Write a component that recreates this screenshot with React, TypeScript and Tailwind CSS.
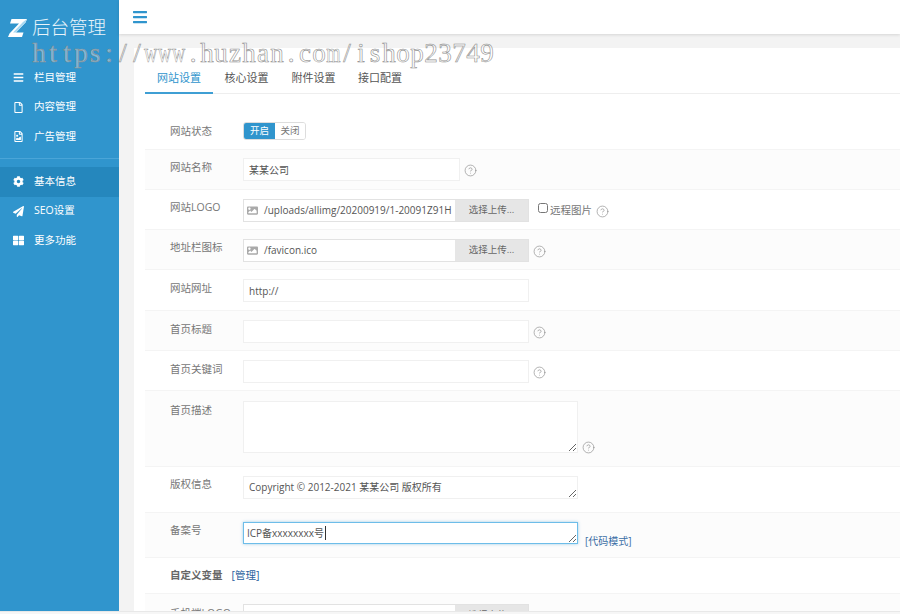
import { FaBars, FaCog, FaImage, FaPaperPlane, FaRegFile, FaRegFileImage, FaThLarge } from 'react-icons/fa';
import { CircleHelp } from 'lucide-react';

const font = "font-['Open_Sans','Noto_Sans_CJK_SC',sans-serif]";
const watermark = 'https://www.huzhan.com/ishop23749'.split('');

function Help() {
  return <CircleHelp className="ml-[4px] size-[13px] shrink-0 text-[#8a8a8a]" strokeWidth={1.2} />;
}

function NavItem({ icon, label, active }: { icon: React.ReactNode; label: string; active?: boolean }) {
  return (
    <div className={`flex items-center pl-[13px] text-[10.5px] text-white ${active ? 'h-[30px] bg-[#2587bd]' : 'h-[29.5px]'}`}>
      <span className="flex w-[21px] items-center text-[11px]">{icon}</span>
      {label}
    </div>
  );
}

function Row({ label, h, alt, top = 9, labelTop = 1, children }: { label: string; h: number; alt?: boolean; top?: number; labelTop?: number; children?: React.ReactNode }) {
  return (
    <div
      className={`flex shrink-0 border-b border-[#f4f4f4] pl-[25px] ${alt ? 'bg-[#fcfcfc]' : 'bg-white'}`}
      style={{ height: h, paddingTop: top }}
    >
      <div className="w-[73px] shrink-0 text-[10.5px] leading-[14px] text-[#777]" style={{ paddingTop: labelTop }}>{label}</div>
      {children}
    </div>
  );
}

function TextInput({ value, width }: { value?: string; width: string }) {
  return (
    <input
      readOnly
      defaultValue={value}
      className={`h-[23px] ${width} border border-[#f0f0f0] bg-white px-[5px] text-[10px] text-[#555] outline-none`}
    />
  );
}

function Upload({ value }: { value: string }) {
  return (
    <div className="flex h-[23px] w-[286px] border border-[#e2e2e2] bg-white text-[10px] text-[#555]">
      <div className="flex min-w-0 flex-1 items-center overflow-hidden pl-[3px]">
        <FaImage className="mr-[6px] size-[11px] shrink-0 text-[#aaa]" />
        <span className="whitespace-nowrap">{value}</span>
      </div>
      <div className="flex w-[73px] shrink-0 items-center justify-center bg-[#e6e6e6] text-[9.5px] text-[#666]">选择上传...</div>
    </div>
  );
}

export default function App() {
  return (
    <div className={`relative h-[614px] w-[900px] overflow-hidden border-b-2 border-[#f6f6f6] bg-[#f3f3f3] ${font}`}>
      <div className="flex h-[612px] border-b border-[#e8e8e8]">
        {/* Sidebar */}
        <aside className="flex w-[119px] shrink-0 flex-col bg-[#3095cd]">
          <div className="flex h-[63px] shrink-0 items-start pl-[8px] pt-[17px]">
            <svg width="19" height="18" viewBox="0 0 19 18" className="mt-[2px]">
              <path d="M3.5 0H19l-1.5 3.5L8 13.5h7.5L14 18H0l1.5-3.5L11 4.5H2z" fill="#fff" />
              <path d="M19 0l-1.5 3.5L8 13.5h-3L15 3z" fill="#a9d9f2" />
            </svg>
            <span className="ml-[5px] text-[18.5px] font-light leading-[20px] text-white/90">后台管理</span>
          </div>
          <NavItem icon={<FaBars />} label="栏目管理" />
          <NavItem icon={<FaRegFile />} label="内容管理" />
          <NavItem icon={<FaRegFileImage />} label="广告管理" />
          <div className="mt-[6px] h-[9px] shrink-0 border-t border-[#4aa5d8]" />
          <NavItem icon={<FaCog />} label="基本信息" active />
          <NavItem icon={<FaPaperPlane />} label="SEO设置" />
          <NavItem icon={<FaThLarge />} label="更多功能" />
        </aside>

        {/* Main */}
        <main className="flex min-w-0 flex-1 flex-col">
          <header className="flex h-[34px] shrink-0 items-center bg-white pl-[13px] shadow-[0_1px_3px_rgba(0,0,0,0.12)]">
            <FaBars className="size-[16px] text-[#3095cd]" />
          </header>

          <div className="ml-[15px] mt-[14px] flex min-h-0 flex-1 flex-col overflow-hidden bg-white pl-[11px]">
            <nav className="flex h-[46px] shrink-0 items-end border-b border-[#eeeeee] text-[11px] text-[#555]">
              <div className="-mb-px w-[68px] border-b-2 border-[#3f9fd4] pb-[6px] text-center text-[#3095cd]">网站设置</div>
              <div className="w-[67px] pb-[7px] text-center">核心设置</div>
              <div className="w-[67px] pb-[7px] text-center">附件设置</div>
              <div className="w-[66px] pb-[7px] text-center">接口配置</div>
            </nav>

            <div className="h-[18px] shrink-0" />

            <Row label="网站状态" h={38} top={8} labelTop={4}>
              <div className="mt-[2px] flex h-[18px] w-[63px] overflow-hidden rounded-[3px] border border-[#dddddd] text-[9.5px]">
                <span className="flex w-[31px] items-center justify-center bg-[#3095cd] text-white">开启</span>
                <span className="flex flex-1 items-center justify-center bg-white text-[#777]">关闭</span>
              </div>
            </Row>
            <Row label="网站名称" h={40} alt top={8} labelTop={2}>
              <div className="flex items-start">
                <TextInput value="某某公司" width="w-[217px]" />
                <span className="mt-[6px]"><Help /></span>
              </div>
            </Row>
            <Row label="网站LOGO" h={40}>
              <Upload value="/uploads/allimg/20200919/1-20091Z91H" />
              <label className="ml-[9px] flex h-[23px] items-start text-[10.5px] text-[#777]">
                <input type="checkbox" className="mr-[2px] mt-[4px] size-[10px] accent-[#3095cd]" />
                <span className="mt-[4px]">远程图片</span>
                <span className="mt-[6px]"><Help /></span>
              </label>
            </Row>
            <Row label="地址栏图标" h={40} alt>
              <Upload value="/favicon.ico" />
              <span className="mt-[6px]"><Help /></span>
            </Row>
            <Row label="网站网址" h={41} top={9} labelTop={2}>
              <TextInput value="http://" width="w-[286px]" />
            </Row>
            <Row label="首页标题" h={40} alt top={9} labelTop={2}>
              <TextInput width="w-[286px]" />
              <span className="mt-[6px]"><Help /></span>
            </Row>
            <Row label="首页关键词" h={40} top={9} labelTop={2}>
              <TextInput width="w-[286px]" />
              <span className="mt-[6px]"><Help /></span>
            </Row>
            <Row label="首页描述" h={76} alt top={10} labelTop={2}>
              <textarea readOnly className="h-[52px] w-[335px] border border-[#f0f0f0] bg-white outline-none" />
              <span className="mt-[40px]"><Help /></span>
            </Row>
            <Row label="版权信息" h={46} top={9} labelTop={1}>
              <textarea
                readOnly
                defaultValue="Copyright © 2012-2021 某某公司 版权所有"
                className="h-[23px] w-[335px] border border-[#f0f0f0] bg-white px-[5px] py-[3px] text-[10px] leading-[14px] text-[#555] outline-none"
              />
            </Row>
            <Row label="备案号" h={45} alt top={9} labelTop={1}>
              <div className="relative h-[22px] w-[335px]">
                <textarea
                  readOnly
                  defaultValue="ICP备xxxxxxxx号"
                  className="h-full w-full border border-[#6dbde9] bg-white px-[3px] py-[3px] text-[10px] leading-[14px] text-[#555] shadow-[0_0_3px_rgba(48,149,205,0.45)] outline-none"
                />
                {/* text caret */}
                <span className="absolute left-[82px] top-[4px] h-[14px] w-px bg-[#333]" />
              </div>
              <span className="ml-[7px] mt-[12px] text-[10px] leading-[14px] text-[#3a6ea5]">[代码模式]</span>
            </Row>
            <div className="flex h-[36px] shrink-0 items-center border-b border-[#f4f4f4] pl-[25px] pt-[1px] text-[10.5px]">
              <span className="font-semibold text-[#666]">自定义变量</span>
              <span className="ml-[9px] text-[#2a5f9e]">[管理]</span>
            </div>
            <Row label="手机端LOGO" h={60} alt top={10} labelTop={2}>
              <Upload value="/uploads/allimg/20200919/1-20091Z91H" />
            </Row>
          </div>
        </main>
      </div>

      {/* Watermark */}
      <div className="pointer-events-none absolute left-[32px] top-[37px] flex font-['Liberation_Serif',serif] text-[27px] leading-[32px] text-white/40 [-webkit-text-stroke:0.6px_#8f8f8f]">
        {watermark.map((ch, i) => (
          <span key={i} className="flex w-[14px] shrink-0 justify-center">
            <span className={ch === 'w' || ch === 'm' ? 'inline-block scale-x-[0.68]' : 'inline-block'}>{ch}</span>
          </span>
        ))}
      </div>
    </div>
  );
}
